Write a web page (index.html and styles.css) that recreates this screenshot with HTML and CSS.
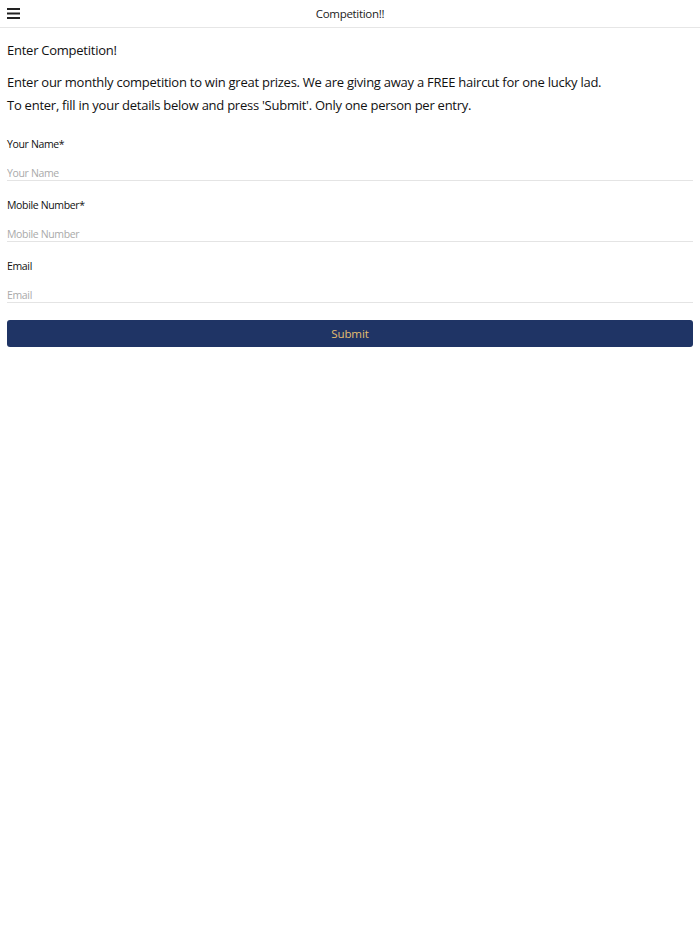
FILE: index.html
```html
<!DOCTYPE html>
<html lang="en">
<head>
<meta charset="UTF-8">
<meta name="viewport" content="width=device-width, initial-scale=1.0">
<title>Competition!!</title>
<link rel="stylesheet" href="styles.css">
</head>
<body>
  <div id="header">
    <button class="menu" aria-label="Menu">
      <svg width="13" height="11" viewBox="0 0 13 11">
        <rect x="0" y="0" width="13" height="2" fill="#222"/>
        <rect x="0" y="4.5" width="13" height="2" fill="#222"/>
        <rect x="0" y="9" width="13" height="2" fill="#222"/>
      </svg>
    </button>
    <div class="title">Competition!!</div>
  </div>

  <div id="content">
    <h1>Enter Competition!</h1>
    <p>Enter our monthly competition to win great prizes. We are giving away a FREE haircut for one lucky lad.</p>
    <p>To enter, fill in your details below and press 'Submit'. Only one person per entry.</p>

    <form id="entry">
      <div class="field">
        <label for="name">Your Name*</label>
        <input type="text" id="name" placeholder="Your Name" />
      </div>
      <div class="field">
        <label for="mobile">Mobile Number*</label>
        <input type="text" id="mobile" placeholder="Mobile Number" />
      </div>
      <div class="field">
        <label for="email">Email</label>
        <input type="text" id="email" placeholder="Email" />
      </div>
      <button type="button" class="submit">Submit</button>
    </form>
  </div>
</body>
</html>
```

FILE: styles.css
```css
body {
  font-family: "Open Sans", Arial, sans-serif;
  background-color: #fff;
  color: #111;
  margin: 0;
  padding: 0;
}
#header {
  position: relative;
  height: 27px;
  border-bottom: 1px solid #e6e6e6;
  display: flex;
  align-items: center;
  justify-content: center;
}
#header .menu {
  position: absolute;
  left: 7px;
  top: 8px;
  padding: 0;
  border: none;
  background: none;
  line-height: 0;
}
#header .title {
  font-size: 11.5px;
  letter-spacing: -0.3px;
  color: #222;
}
#content {
  padding: 0 7px;
}
h1 {
  font-size: 13px;
  letter-spacing: -0.25px;
  font-weight: normal;
  margin: 12px 0 11px;
  line-height: 20px;
}
p {
  font-size: 13px;
  letter-spacing: -0.25px;
  margin: 0;
  line-height: 23px;
}
#entry {
  margin-top: 19px;
}
.field {
  display: flex;
  flex-direction: column;
}
.field label {
  font-size: 10.5px;
  letter-spacing: -0.35px;
  line-height: 16px;
  color: #111;
  margin-bottom: 13px;
}
.field input {
  font-family: inherit;
  font-size: 10.5px;
  letter-spacing: -0.35px;
  border: none;
  border-bottom: 1px solid #e4e4e4;
  padding: 0;
  height: 15px;
  outline: none;
  margin-bottom: 16px;
}
.field input::placeholder {
  color: #aaa;
}
.submit {
  width: 100%;
  height: 27px;
  margin-top: 1px;
  border: none;
  border-radius: 3px;
  background-color: #1f3465;
  color: #e4bf6f;
  font-family: inherit;
  font-size: 11.5px;
  letter-spacing: -0.1px;
}
```
